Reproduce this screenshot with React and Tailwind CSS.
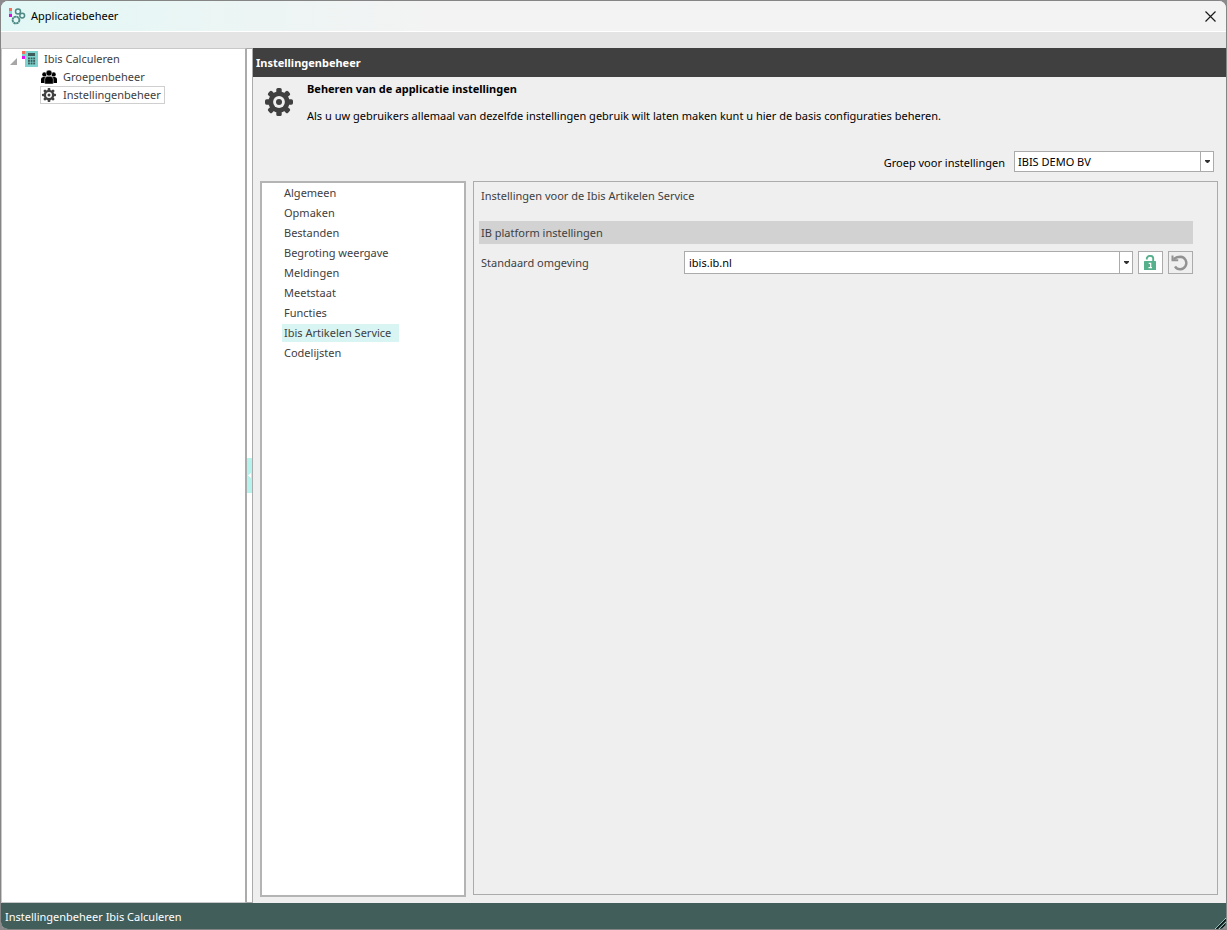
import { useState } from "react";

const teeth = [0, 45, 90, 135, 180, 225, 270, 315];

function GearIcon({ className, holeClass }) {
  return (
    <svg viewBox="-16 -16 32 32" className={`shrink-0 ${className}`} aria-hidden="true">
      <circle r="10.6" fill="#404040" />
      {teeth.map((angle) => (
        <rect
          key={angle}
          x="-2.7"
          y="-14"
          width="5.4"
          height="6"
          rx="1.6"
          fill="#404040"
          transform={`rotate(${angle})`}
        />
      ))}
      <circle r="5.9" className={holeClass} />
      <circle r="3" fill="#404040" />
    </svg>
  );
}

function AppLogo() {
  return (
    <svg viewBox="0 0 17 17" className="size-[17px]" aria-hidden="true">
      <rect x="0" y="0" width="3" height="3" fill="#f2705a" />
      <rect x="0" y="3" width="3" height="3" fill="#86d5d0" />
      <rect x="0" y="6" width="3" height="3" fill="#d40ee0" />
      <g fill="none" stroke="#4f8a85">
        <circle cx="9" cy="3.4" r="2.5" strokeWidth="1.5" />
        <circle cx="13.2" cy="7.6" r="2.400" strokeWidth="1.500" />
        <circle cx="7" cy="12" r="3.400" strokeWidth="1.900" strokeDasharray="2.400 0.270" />
      </g>
    </svg>
  );
}

function CalculatorIcon() {
  return (
    <svg viewBox="0 0 16 16" className="size-4" aria-hidden="true">
      <rect x="3" width="13" height="16" fill="#7fd3ce" />
      <rect y="0" width="3" height="3" fill="#f2705a" />
      <rect y="3" width="3" height="2" fill="#7fd3ce" />
      <rect y="5" width="3" height="3" fill="#e010f0" />
      <rect x="6" y="2" width="7" height="3" fill="#3d5c5b" />
      <g fill="#3d5c5b">
        {[6.5, 9, 11.5].map((y) =>
          [6, 8.6, 11.2].map((x) => <rect key={`${x}-${y}`} x={x} y={y} width="1.9" height="1.9" />)
        )}
      </g>
    </svg>
  );
}

function PeopleIcon() {
  return (
    <svg viewBox="0 0 16 14" className="h-3.5 w-4" aria-hidden="true">
      <g fill="#000">
        <circle cx="3.4" cy="4.4" r="2.2" />
        <circle cx="12.6" cy="4.4" r="2.2" />
        <path d="M0 13V9.500Q0 7 2.500 7H5V13ZM16 13V9.500Q16 7 13.500 7H11V13Z" />
      </g>
      <g fill="#000" stroke="#fff" strokeWidth="0.5">
        <circle cx="8" cy="3.100" r="3" />
        <path d="M3.700 14V9.500Q3.700 6.300 6.500 6.300H9.500Q12.300 6.300 12.300 9.500V14Z" />
      </g>
    </svg>
  );
}

function LockIcon() {
  return (
    <svg viewBox="0 0 12 15" className="h-[15px] w-3" aria-hidden="true">
      <path d="M2.800 4.600V3.600A3.200 2.700 0 0 1 9.200 3.600V7" fill="none" stroke="#56b08c" strokeWidth="1.900" />
      <rect x="0" y="6" width="12" height="9" rx="0.500" fill="#56b08c" />
      <path d="M4.700 8.300H6.700V12.500M4.500 12.700H8" fill="none" stroke="#fff" strokeWidth="1.200" />
    </svg>
  );
}

function UndoIcon() {
  return (
    <svg viewBox="0 0 18 16" className="h-4 w-[18px]" fill="none" stroke="#929292" aria-hidden="true">
      <path d="M2.500 4C5 2.400 7 1.800 9.500 1.800A6.200 6.200 0 1 1 4 11.500" strokeWidth="2.400" />
      <path d="M1.500 0.500V5.300H7.200" strokeWidth="2" />
    </svg>
  );
}

function ComboBox({ id, options, className, selectClass }) {
  return (
    <div className={`relative border border-[#ababab] bg-white ${className}`}>
      <select
        id={id}
        className={`block w-full appearance-none bg-transparent pr-4 text-black outline-none ${selectClass}`}
      >
        {options.map((option) => (
          <option key={option}>{option}</option>
        ))}
      </select>
      <span className="pointer-events-none absolute inset-y-0 right-0 flex w-[13px] items-center justify-center border-l border-[#ababab]">
        <svg viewBox="0 0 5 3" className="h-[3px] w-[5px]" aria-hidden="true">
          <path d="M0 0H5V1L3 3H2L0 1Z" fill="#303030" />
        </svg>
      </span>
    </div>
  );
}

const categories = [
  "Algemeen",
  "Opmaken",
  "Bestanden",
  "Begroting weergave",
  "Meldingen",
  "Meetstaat",
  "Functies",
  "Ibis Artikelen Service",
  "Codelijsten",
];

export default function App() {
  const [category, setCategory] = useState("Ibis Artikelen Service");

  return (
    <div className="bg-[#8c8a8c] font-['Noto_Sans','Open_Sans',sans-serif] text-[11px] leading-4 text-[#404040]">
      <div className="flex min-h-screen flex-col overflow-hidden rounded-lg border border-[#858585] bg-[#efefef]">
        <header className="flex h-[31px] items-center border-b border-white bg-linear-to-r from-[#e2f8f6] to-[#f3f3f3] to-35% pr-2 pl-2">
          <AppLogo />
          <h1 className="ml-1 flex-1 pl-px text-black">Applicatiebeheer</h1>
          <button type="button" aria-label="Sluiten" className="p-0.5">
            <svg viewBox="0 0 11 11" className="size-[11px]" aria-hidden="true">
              <path d="M0.500 0.500L10.500 10.500M10.500 0.500L0.500 10.500" stroke="#1a1a1a" strokeWidth="1.200" />
            </svg>
          </button>
        </header>
        <div className="h-4 bg-[#e4e4e4]" />

        <div className="flex flex-1">
          <nav className="w-[245px] border border-[#c8c8c8] border-r-[#ababab] bg-white pt-px">
            <div className="flex h-[18px] items-center pl-2">
              <svg viewBox="0 0 7 7" className="mt-1 size-[7px]" aria-hidden="true">
                <path d="M7 0V7H0Z" fill="#a6a6a6" />
              </svg>
              <span className="ml-[5px]">
                <CalculatorIcon />
              </span>
              <a href="#calculeren" className="ml-1.5">Ibis Calculeren</a>
            </div>
            <ul className="pl-[38px]">
              <li>
                <a href="#groepen" className="flex h-[18px] items-center gap-1.5 pl-px">
                  <PeopleIcon />
                  Groepenbeheer
                </a>
              </li>
              <li>
                <a
                  href="#instellingen"
                  className="flex h-[18px] w-[125px] items-center gap-1.5 border border-[#cfcfcf] whitespace-nowrap"
                >
                  <GearIcon className="size-4" holeClass="fill-white" />
                  Instellingenbeheer
                </a>
              </li>
            </ul>
          </nav>

          <div className="flex w-[7px] flex-col justify-center border border-[#ababab] bg-white">
            <button
              type="button"
              aria-label="Paneel inklappen"
              className="flex h-[35px] items-center justify-center bg-[#b5f3ec]"
            >
              <svg viewBox="0 0 3 5" className="h-[5px] w-[3px]" aria-hidden="true">
                <path d="M3 0V5L0 2.500Z" fill="#fff" />
              </svg>
            </button>
          </div>

          <main className="flex min-w-0 flex-1 flex-col">
            <h2 className="flex h-[29px] items-center bg-[#404040] px-[3px] font-bold text-white">
              Instellingenbeheer
            </h2>
            <div className="flex gap-3 pt-1 pl-2.5 text-black">
              <GearIcon className="mt-[5px] size-8" holeClass="fill-[#efefef]" />
              <div className="flex flex-col gap-[11px]">
                <h3 className="font-bold">Beheren van de applicatie instellingen</h3>
                <p>
                  Als u uw gebruikers allemaal van dezelfde instellingen gebruik wilt laten maken
                  kunt u hier de basis configuraties beheren.
                </p>
              </div>
            </div>
            <div className="mt-[27px] flex items-center justify-end gap-[9px] pr-3 text-black">
              <label htmlFor="groep" className="pt-0.5">Groep voor instellingen</label>
              <ComboBox
                id="groep"
                options={["IBIS DEMO BV"]}
                className="w-[200px]"
                selectClass="h-[19px] pl-[3px]"
              />
            </div>

            <div className="mt-[9px] flex flex-1 gap-[7px] pr-2 pb-1.5 pl-[7px]">
              <ul className="w-[206px] border-2 border-[#b4b4b4] bg-white pt-px pl-5">
                {categories.map((name) => (
                  <li key={name} className="h-5">
                    <button
                      type="button"
                      onClick={() => setCategory(name)}
                      className={
                        name === category
                          ? "h-[18px] bg-[#d9f5f3] pr-2 pl-0.5"
                          : "h-[18px] pr-2 pl-0.5"
                      }
                    >
                      {name}
                    </button>
                  </li>
                ))}
              </ul>

              <section className="mb-0.5 flex-1 border border-[#ababab] pt-1.5 pr-6 pl-[5px]">
                <p className="pl-0.5">Instellingen voor de Ibis Artikelen Service</p>
                <h4 className="mt-[17px] flex h-[23px] items-center bg-[#d2d2d2] pl-0.5">
                  IB platform instellingen
                </h4>
                <div className="mt-[7px] flex items-center pl-0.5">
                  <label htmlFor="omgeving" className="w-[203px]">
                    Standaard omgeving
                  </label>
                  <ComboBox
                    id="omgeving"
                    options={["ibis.ib.nl"]}
                    className="flex-1"
                    selectClass="h-[21px] pl-1"
                  />
                  <button
                    type="button"
                    aria-label="Ontgrendeld"
                    className="ml-[5px] flex h-[23px] w-[25px] items-center justify-center border border-[#ababab] bg-white pr-px"
                  >
                    <LockIcon />
                  </button>
                  <button
                    type="button"
                    aria-label="Herstellen"
                    className="ml-[5px] flex h-[23px] w-[25px] items-center justify-center border border-[#ababab] pr-px"
                  >
                    <UndoIcon />
                  </button>
                </div>
              </section>
            </div>
          </main>
        </div>

        <footer className="flex h-[26px] items-center justify-between bg-[#415e5b] pl-1 text-white">
          <span className="pt-0.5">Instellingenbeheer Ibis Calculeren</span>
          <svg viewBox="0 0 11 11" className="size-[11px] self-end" aria-hidden="true">
            <path d="M0 11L11 0M4 11L11 4" stroke="#a5d4cf" strokeWidth="1" />
            <path d="M1.500 11L11 1.500M5.500 11L11 5.500" stroke="#0c1515" strokeWidth="1.500" />
          </svg>
        </footer>
      </div>
    </div>
  );
}
